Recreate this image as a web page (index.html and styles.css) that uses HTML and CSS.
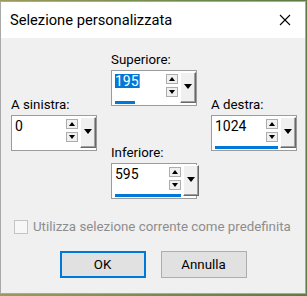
FILE: index.html
```html
<!DOCTYPE html>
<html lang="it">
<head>
  <meta charset="UTF-8" />
  <title>Selezione personalizzata</title>
  <link rel="stylesheet" href="styles.css">
</head>
<body>
  <div class="window">
    <div class="titlebar">
      <span class="title">Selezione personalizzata</span>
      <svg class="close" width="12" height="12" viewBox="0 0 12 12">
        <path d="M1 1 L11 11 M11 1 L1 11" stroke="#000" stroke-width="1.1" fill="none" />
      </svg>
    </div>

    <div class="content">
      <div class="spin-grid">
        <div class="side">
          <div class="spin-group">
            <label class="spin-label">A sinistra:</label>
            <div class="spin">
              <span class="spin-value">0</span>
              <div class="spin-arrows">
                <span class="arrow-btn"><i class="tri up"></i></span>
                <span class="arrow-btn"><i class="tri down"></i></span>
              </div>
              <span class="spin-drop"><i class="tri big"></i></span>
              <div class="spin-bar" style="width: 0px"></div>
            </div>
          </div>
        </div>

        <div class="middle">
          <div class="spin-group">
            <label class="spin-label">Superiore:</label>
            <div class="spin">
              <span class="spin-value selected">195</span>
              <div class="spin-arrows">
                <span class="arrow-btn"><i class="tri up"></i></span>
                <span class="arrow-btn"><i class="tri down"></i></span>
              </div>
              <span class="spin-drop"><i class="tri big"></i></span>
              <div class="spin-bar" style="width: 20px"></div>
            </div>
          </div>

          <div class="spin-group">
            <label class="spin-label">Inferiore:</label>
            <div class="spin">
              <span class="spin-value">595</span>
              <div class="spin-arrows">
                <span class="arrow-btn"><i class="tri up"></i></span>
                <span class="arrow-btn"><i class="tri down"></i></span>
              </div>
              <span class="spin-drop"><i class="tri big"></i></span>
              <div class="spin-bar" style="width: 66px"></div>
            </div>
          </div>
        </div>

        <div class="side">
          <div class="spin-group">
            <label class="spin-label">A destra:</label>
            <div class="spin">
              <span class="spin-value">1024</span>
              <div class="spin-arrows">
                <span class="arrow-btn"><i class="tri up"></i></span>
                <span class="arrow-btn"><i class="tri down"></i></span>
              </div>
              <span class="spin-drop"><i class="tri big"></i></span>
              <div class="spin-bar" style="width: 100%"></div>
            </div>
          </div>
        </div>
      </div>

      <div class="check-row">
        <span class="checkbox"></span>
        <span class="check-text">Utilizza selezione corrente come predefinita</span>
      </div>

      <div class="buttons">
        <div class="btn default">OK</div>
        <div class="btn">Annulla</div>
      </div>
    </div>
  </div>
</body>
</html>
```

FILE: styles.css
```css
* { box-sizing: border-box; }

body {
  margin: 0;
  width: 307px;
  height: 296px;
  overflow: hidden;
  background: linear-gradient(90deg, #9c9a5c, #6f8a4c 60%, #5f7a44);
  font-family: Roboto, "Noto Sans", sans-serif;
  color: #000;
}

.window {
  margin-top: 1px;
  width: 306px;
  height: 293px;
  background-color: #f0f0f0;
  border: 1px solid #a8a8a8;
  display: flex;
  flex-direction: column;
}

.titlebar {
  height: 36px;
  flex: none;
  background-color: #fff;
  display: flex;
  align-items: center;
  justify-content: space-between;
  padding: 0 14px 0 9px;
}

.title {
  font-size: 14.7px;
}

.close {
  display: block;
}

.content {
  padding: 13px 10px 0 10px;
  font-size: 13.3px;
}

.spin-grid {
  display: grid;
  grid-template-columns: 86px 86px 86px;
  column-gap: 14px;
}

.side {
  align-self: center;
  margin-bottom: 4px;
}

.middle {
  display: flex;
  flex-direction: column;
  gap: 38px;
}

.spin-label {
  display: block;
  line-height: 17px;
  margin-bottom: 2px;
}

.spin {
  display: grid;
  grid-template-columns: 1fr 12px 16px;
  grid-template-rows: 1fr 3px;
  column-gap: 2px;
  height: 36px;
  background-color: #fff;
  border: 1px solid #9c9c9c;
  padding: 3px 0 1px 3px;
}

.spin-value {
  align-self: start;
  justify-self: start;
  font-size: 14px;
  line-height: 13px;
  padding-top: 1px;
}

.spin-value.selected {
  background-color: #0078d7;
  color: #fff;
  border-right: 1px solid #e0842a;
}

.spin-arrows {
  display: flex;
  flex-direction: column;
  gap: 3px;
}

.arrow-btn {
  height: 10px;
  background-color: #f0f0f0;
  border: 1px solid #adadad;
  display: flex;
  align-items: center;
  justify-content: center;
}

.spin-drop {
  grid-row: 1 / 3;
  grid-column: 3;
  margin-top: -2px;
  margin-bottom: 1px;
  background-color: #f0f0f0;
  border-top: 1px solid #fff;
  border-left: 1px solid #fff;
  border-right: 1px solid #696969;
  border-bottom: 1px solid #696969;
  box-shadow: inset -1px -1px 0 #a0a0a0;
  display: flex;
  justify-content: center;
  padding-top: 11px;
}

.spin-bar {
  grid-row: 2;
  grid-column: 1 / 3;
  height: 3px;
  background-color: #0078d7;
}

.tri {
  display: block;
  width: 0;
  height: 0;
  border-left: 3px solid transparent;
  border-right: 3px solid transparent;
}

.tri.up {
  border-bottom: 4px solid #000;
}

.tri.down {
  border-top: 4px solid #000;
}

.tri.big {
  border-left-width: 4px;
  border-right-width: 4px;
  border-top: 5px solid #000;
}

.check-row {
  display: flex;
  align-items: center;
  gap: 5px;
  margin-top: 20px;
  padding-left: 3px;
}

.checkbox {
  width: 14px;
  height: 14px;
  border: 1px solid #c4c4c4;
  background-color: #f7f7f7;
}

.check-text {
  color: #8d8d8d;
}

.buttons {
  display: flex;
  justify-content: center;
  gap: 15px;
  margin-top: 17px;
}

.btn {
  width: 86px;
  height: 27px;
  background-color: #e1e1e1;
  border: 1px solid #adadad;
  display: flex;
  align-items: center;
  justify-content: center;
}

.btn.default {
  border: 2px solid #0078d7;
}
```
